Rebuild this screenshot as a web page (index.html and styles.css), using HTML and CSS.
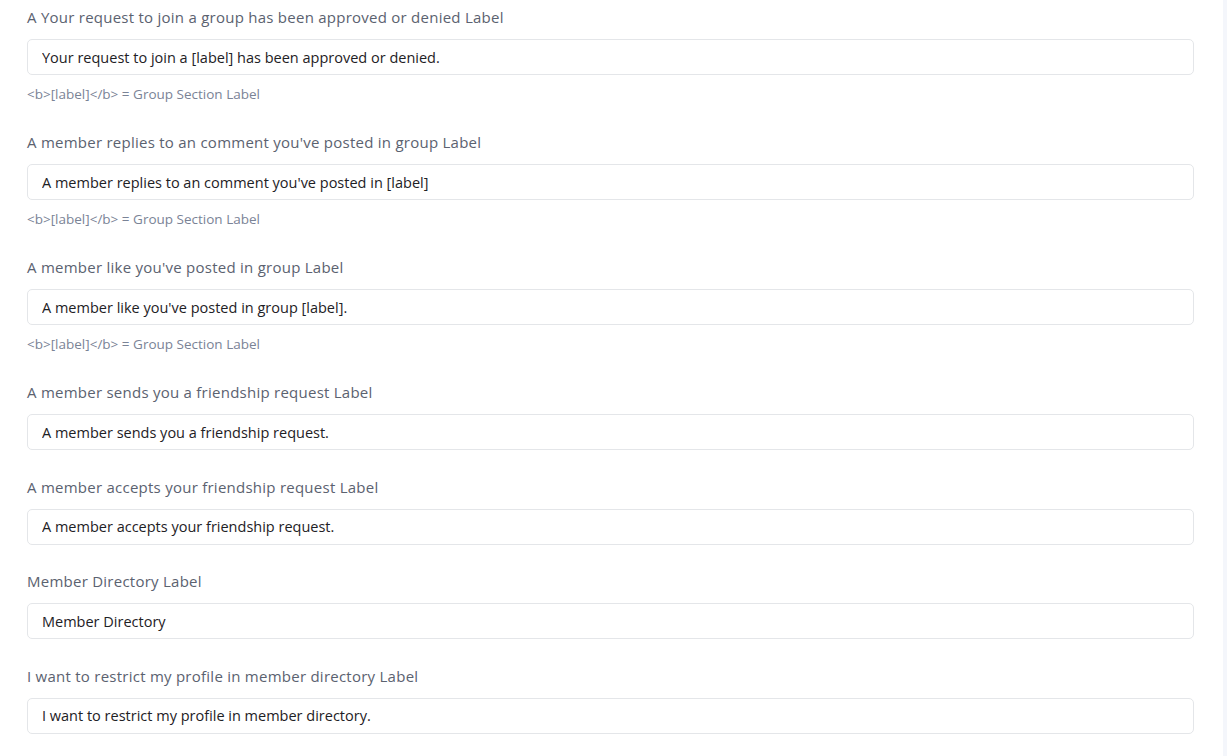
FILE: index.html
```html
<!DOCTYPE html>
<html lang="en">
<head>
    <meta charset="UTF-8">
    <meta name="viewport" content="width=device-width, initial-scale=1.0">
    <title>Notification Labels</title>
    <link rel="stylesheet" href="styles.css">
</head>
<body>
    <div class="page">
        <form class="settings">
            <div class="field">
                <label for="f1">A Your request to join a group has been approved or denied Label</label>
                <input type="text" id="f1" value="Your request to join a [label] has been approved or denied.">
                <p class="help">&lt;b&gt;[label]&lt;/b&gt; = Group Section Label</p>
            </div>
            <div class="field">
                <label for="f2">A member replies to an comment you've posted in group Label</label>
                <input type="text" id="f2" value="A member replies to an comment you've posted in [label]">
                <p class="help">&lt;b&gt;[label]&lt;/b&gt; = Group Section Label</p>
            </div>
            <div class="field">
                <label for="f3">A member like you've posted in group Label</label>
                <input type="text" id="f3" value="A member like you've posted in group [label].">
                <p class="help">&lt;b&gt;[label]&lt;/b&gt; = Group Section Label</p>
            </div>
            <div class="field">
                <label for="f4">A member sends you a friendship request Label</label>
                <input type="text" id="f4" value="A member sends you a friendship request.">
            </div>
            <div class="field">
                <label for="f5">A member accepts your friendship request Label</label>
                <input type="text" id="f5" value="A member accepts your friendship request.">
            </div>
            <div class="field">
                <label for="f6">Member Directory Label</label>
                <input type="text" id="f6" value="Member Directory">
            </div>
            <div class="field">
                <label for="f7">I want to restrict my profile in member directory Label</label>
                <input type="text" id="f7" value="I want to restrict my profile in member directory.">
            </div>
        </form>
        <div class="side-strip"></div>
    </div>
</body>
</html>
```

FILE: styles.css
```css
html, body {
    margin: 0;
    padding: 0;
    height: 100%;
    overflow: hidden;
    background-color: #ffffff;
    font-family: "Open Sans", Arial, sans-serif;
}
.page {
    display: flex;
    height: 100%;
}
.settings {
    flex: 1;
    padding: 7px 29px 0 27px;
}
.side-strip {
    width: 4px;
    background-color: #f4f6fb;
}
.field {
    margin-bottom: 26.5px;
}
.field label {
    display: block;
    font-size: 15px;
    letter-spacing: 0.25px;
    line-height: 20px;
    color: #5b6270;
    margin-bottom: 12px;
}
.field input {
    display: block;
    width: 100%;
    height: 36px;
    box-sizing: border-box;
    padding: 0 14px;
    border: 1px solid #e4e6e9;
    border-radius: 5px;
    font-family: inherit;
    font-size: 14.5px;
    color: #1e2125;
    background-color: #fff;
    outline: none;
}
.help {
    margin: 10px 0 0;
    font-size: 13.5px;
    line-height: 18px;
    color: #7a8396;
}
.field:has(.help) {
    margin-bottom: 29px;
}
```
